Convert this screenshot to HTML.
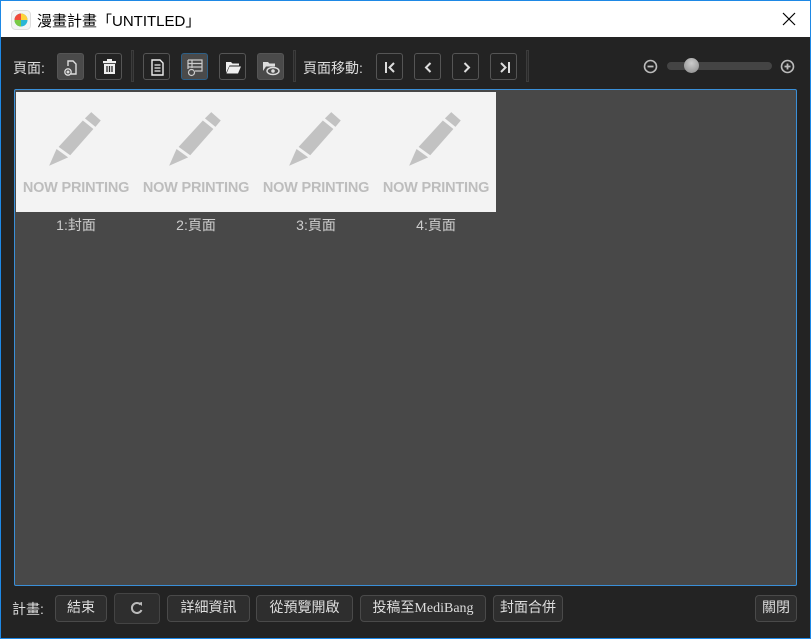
<!DOCTYPE html>
<html><head><meta charset="utf-8"><style>
*{margin:0;padding:0;box-sizing:border-box}
body{width:811px;height:639px;overflow:hidden;background:#232323;font-family:"Liberation Sans","Noto Sans CJK TC",sans-serif;position:relative}
.win{position:absolute;left:0;top:0;width:811px;height:639px;border:1px solid #1e88e5;border-top:none}
.title{position:absolute;left:0;top:0;width:811px;height:37px;background:#fff;border:1px solid #1e88e5;border-bottom:none}
.title .t{position:absolute;left:36px;top:9px;font-size:15px;color:#000}
.abs{position:absolute}
.btn{position:absolute;width:27px;height:27px;border:1px solid #555;border-radius:3px;background:#232323}
.btn.on{background:#4a4a4a}
.btn.sel{background:#4a4a4a;border-color:#2d5f86}
.btn svg{position:absolute;left:0;top:0}
.sep{position:absolute;top:50px;width:3px;height:32px;border:1px solid #3c3c3c;background:#2a2a2a}
.lbl{position:absolute;color:#ddd;font-size:14px}
.panel{position:absolute;left:14px;top:89px;width:783px;height:497px;background:#484848;border:1px solid #3a8fd8;border-radius:2px}
.th{position:absolute;top:2px;width:120px;height:120px;background:#f3f3f3}
.th span{position:absolute;left:0;width:120px;top:88px;text-align:center;font-weight:bold;font-size:14.5px;color:#bdbdbd;letter-spacing:-0.2px}
.cap{position:absolute;top:125px;width:120px;text-align:center;color:#ccc;font-size:14px}
.bb{position:absolute;top:595px;height:27px;border:1px solid #4a4a4a;border-radius:4px;background:#2e2e2e;color:#ddd;font-size:14px;text-align:center;line-height:25px;font-family:"Liberation Serif","Noto Sans CJK TC",serif}
</style></head><body>
<div class="win"></div>
<div class="title">
<svg class="abs" style="left:10px;top:9px" width="20" height="20" viewBox="0 0 20 20"><rect x="0.5" y="0.5" width="19" height="19" rx="4" fill="#f4f4f4" stroke="#ddd"/><circle cx="10" cy="10" r="6.5" fill="#29b6d6"/><path d="M10 3.5A6.5 6.5 0 0 1 16.5 10L10 10Z" fill="#ffd23a"/><path d="M3.5 10A6.5 6.5 0 0 1 10 3.5L10 10Z" fill="#f24a3a"/><path d="M3.5 10A6.5 6.5 0 0 0 10 16.5L10 10Z" fill="#7ac943"/></svg>
<div class="t">漫畫計畫「UNTITLED」</div>
<svg class="abs" style="left:781px;top:11px" width="14" height="14"><path d="M1 1L13 13M13 1L1 13" stroke="#000" stroke-width="1.2"/></svg>
</div>

<div class="lbl" style="left:13px;top:58px">頁面:</div>
<div class="btn on" style="left:57px;top:53px"><svg width="27" height="27" viewBox="0 0 27 27"><path d="M10 12V7h5l3 3v10h-5" fill="none" stroke="#ddd" stroke-width="1.4"/><circle cx="10" cy="18" r="3.2" fill="none" stroke="#ddd" stroke-width="1.3"/><circle cx="10" cy="18" r="1.5" fill="#ddd"/></svg></div>
<div class="btn" style="left:95px;top:53px"><svg width="27" height="27" viewBox="0 0 27 27"><rect x="7" y="7" width="13" height="2.2" fill="#eee"/><rect x="11" y="5" width="5" height="2" fill="#eee"/><path d="M8 10h11v10H8z" fill="#eee"/><path d="M11 12v6M13.5 12v6M16 12v6" stroke="#232323" stroke-width="1.3"/></svg></div>
<div class="sep" style="left:131px"></div>
<div class="btn" style="left:143px;top:53px"><svg width="27" height="27" viewBox="0 0 27 27"><path d="M8 6h8l3 3v12H8z" fill="none" stroke="#eee" stroke-width="1.4"/><path d="M10.5 11h6M10.5 14h6M10.5 17h6" stroke="#eee" stroke-width="1.2"/></svg></div>
<div class="btn sel" style="left:181px;top:53px"><svg width="27" height="27" viewBox="0 0 27 27"><path d="M6 6h14v11H13M6 6v9M6 9.5h14M6 13h14M10 6v8" fill="none" stroke="#ccc" stroke-width="1.2"/><circle cx="9.5" cy="18.5" r="3" fill="none" stroke="#ccc" stroke-width="1.2"/></svg></div>
<div class="btn" style="left:219px;top:53px"><svg width="27" height="27" viewBox="0 0 27 27"><path d="M6 8h5l1.5 1.5H19v2H9.5L6 19z" fill="#eee"/><path d="M9.5 12.5H21L18 19.5H6.5z" fill="#eee"/></svg></div>
<div class="btn on" style="left:257px;top:53px"><svg width="27" height="27" viewBox="0 0 27 27"><path d="M5 8h5l1.5 1.5H17v3H8L5 17z" fill="#ddd"/><ellipse cx="15" cy="17" rx="6" ry="3.5" fill="#4a4a4a" stroke="#ddd" stroke-width="1.4"/><circle cx="15" cy="17" r="1.8" fill="#ddd"/></svg></div>
<div class="sep" style="left:293px"></div>
<div class="lbl" style="left:303px;top:58px">頁面移動:</div>
<div class="btn" style="left:376px;top:53px"><svg width="27" height="27"><path d="M9 8v11" stroke="#ddd" stroke-width="2"/><path d="M17 9l-4.5 4.5L17 18" fill="none" stroke="#ddd" stroke-width="2"/></svg></div>
<div class="btn" style="left:414px;top:53px"><svg width="27" height="27"><path d="M15.5 9L11 13.5 15.5 18" fill="none" stroke="#ddd" stroke-width="2"/></svg></div>
<div class="btn" style="left:452px;top:53px"><svg width="27" height="27"><path d="M11.5 9L16 13.5 11.5 18" fill="none" stroke="#ddd" stroke-width="2"/></svg></div>
<div class="btn" style="left:490px;top:53px"><svg width="27" height="27"><path d="M18 8v11" stroke="#ddd" stroke-width="2"/><path d="M10 9l4.5 4.5L10 18" fill="none" stroke="#ddd" stroke-width="2"/></svg></div>
<div class="sep" style="left:526px"></div>
<svg class="abs" style="left:643px;top:59px" width="15" height="15"><circle cx="7.5" cy="7.5" r="6" fill="none" stroke="#bbb" stroke-width="1.6"/><path d="M4.5 7.5h6" stroke="#bbb" stroke-width="1.8"/></svg>
<div class="abs" style="left:667px;top:62px;width:105px;height:8px;border-radius:4px;background:#444"></div>
<div class="abs" style="left:684px;top:58px;width:15px;height:15px;border-radius:50%;background:radial-gradient(circle at 50% 35%,#ccc,#888)"></div>
<svg class="abs" style="left:780px;top:59px" width="15" height="15"><circle cx="7.5" cy="7.5" r="6" fill="none" stroke="#bbb" stroke-width="1.6"/><path d="M4.5 7.5h6M7.5 4.5v6" stroke="#bbb" stroke-width="1.8"/></svg>

<div class="panel">
<div class="th" style="left:1px"><svg class="abs" style="left:31px;top:18px" width="58" height="60" viewBox="0 0 55 57"><path d="M42 2l9 8-5 6-10-8z" fill="#c2c2c2"/><path d="M34 10l10 8-22 25-11-8z" fill="#c2c2c2"/><path d="M9 37l11 8L2 53z" fill="#c2c2c2"/></svg><span>NOW PRINTING</span></div>
<div class="th" style="left:121px"><svg class="abs" style="left:31px;top:18px" width="58" height="60" viewBox="0 0 55 57"><path d="M42 2l9 8-5 6-10-8z" fill="#c2c2c2"/><path d="M34 10l10 8-22 25-11-8z" fill="#c2c2c2"/><path d="M9 37l11 8L2 53z" fill="#c2c2c2"/></svg><span>NOW PRINTING</span></div>
<div class="th" style="left:241px"><svg class="abs" style="left:31px;top:18px" width="58" height="60" viewBox="0 0 55 57"><path d="M42 2l9 8-5 6-10-8z" fill="#c2c2c2"/><path d="M34 10l10 8-22 25-11-8z" fill="#c2c2c2"/><path d="M9 37l11 8L2 53z" fill="#c2c2c2"/></svg><span>NOW PRINTING</span></div>
<div class="th" style="left:361px"><svg class="abs" style="left:31px;top:18px" width="58" height="60" viewBox="0 0 55 57"><path d="M42 2l9 8-5 6-10-8z" fill="#c2c2c2"/><path d="M34 10l10 8-22 25-11-8z" fill="#c2c2c2"/><path d="M9 37l11 8L2 53z" fill="#c2c2c2"/></svg><span>NOW PRINTING</span></div>
<div class="cap" style="left:1px">1:封面</div>
<div class="cap" style="left:121px">2:頁面</div>
<div class="cap" style="left:241px">3:頁面</div>
<div class="cap" style="left:361px">4:頁面</div>
</div>

<div class="lbl" style="left:12px;top:599px">計畫:</div>
<div class="bb" style="left:55px;width:52px">結束</div>
<div class="bb" style="left:114px;top:593px;width:46px;height:31px;border-color:#444;background:#2e2e2e"><svg width="44" height="29"><path d="M25.5 10.5A5 5 0 1 0 26.5 16" fill="none" stroke="#bbb" stroke-width="2"/><path d="M23 9l4-1v4z" fill="#bbb"/></svg></div>
<div class="bb" style="left:167px;width:83px">詳細資訊</div>
<div class="bb" style="left:256px;width:97px">從預覽開啟</div>
<div class="bb" style="left:360px;width:126px">投稿至MediBang</div>
<div class="bb" style="left:493px;width:70px">封面合併</div>
<div class="bb" style="left:755px;width:42px">關閉</div>
</body></html>
